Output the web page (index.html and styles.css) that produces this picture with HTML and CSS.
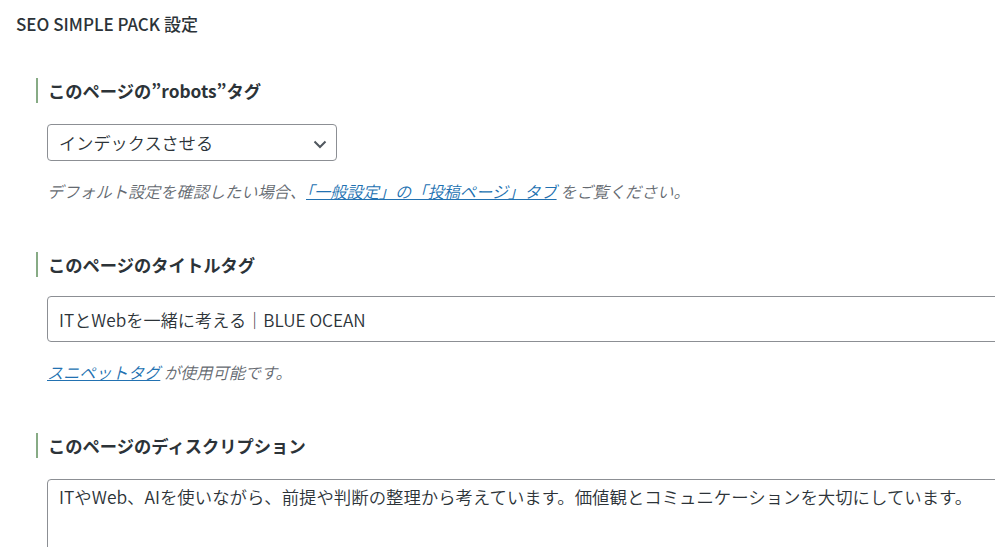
FILE: index.html
```html
<!DOCTYPE html>
<html lang="ja">
<head>
<meta charset="utf-8">
<title>SEO SIMPLE PACK 設定</title>
<link rel="stylesheet" href="styles.css">
</head>
<body>
<div class="page">
  <h1 class="page-title">SEO SIMPLE PACK 設定</h1>

  <section class="field first">
    <h2 class="field-label">このページの”robots”タグ</h2>
    <div class="control">
      <select class="select">
        <option>インデックスさせる</option>
      </select>
    </div>
    <p class="help">デフォルト設定を確認したい場合、<a href="#">「一般設定」の「投稿ページ」タブ</a> をご覧ください。</p>
  </section>

  <section class="field">
    <h2 class="field-label second">このページのタイトルタグ</h2>
    <div class="control">
      <input class="text-input" type="text" value="ITとWebを一緒に考える｜BLUE OCEAN">
    </div>
    <p class="help"><a href="#">スニペットタグ</a> が使用可能です。</p>
  </section>

  <section class="field">
    <h2 class="field-label">このページのディスクリプション</h2>
    <div class="control">
      <textarea class="textarea" rows="4">ITやWeb、AIを使いながら、前提や判断の整理から考えています。価値観とコミュニケーションを大切にしています。</textarea>
    </div>
  </section>
</div>
</body>
</html>
```

FILE: styles.css
```css
html, body {
  margin: 0;
  padding: 0;
  background: #ffffff;
  overflow: hidden;
}

body {
  font-family: "Noto Sans CJK JP", "Noto Sans", sans-serif;
  color: #1d2327;
}

.page {
  padding-left: 16px;
  display: flex;
  flex-direction: column;
}

.page-title {
  margin: 0;
  height: 48px;
  line-height: 48px;
  font-size: 17px;
  font-weight: 500;
  color: #2c3338;
}

.field {
  display: flex;
  flex-direction: column;
  margin-top: 51px;
}

.field.first {
  margin-top: 30px;
}

.field-label {
  margin: 0 0 0 20px;
  padding-left: 10px;
  border-left: 2px solid #87ab85;
  height: 25px;
  line-height: 25px;
  font-size: 17.3px;
  font-weight: 700;
  color: #2c3338;
}

.control {
  margin: 21px 0 0 31px;
}

.field-label.second + .control {
  margin-top: 19px;
}

.select {
  appearance: none;
  -webkit-appearance: none;
  width: 290px;
  height: 37px;
  box-sizing: border-box;
  border: 1px solid #8c8f94;
  border-radius: 4px;
  padding: 0 30px 0 11px;
  font-family: inherit;
  font-size: 17.2px;
  font-weight: 350;
  color: #2c3338;
  background: #fff url("data:image/svg+xml;utf8,<svg xmlns='http://www.w3.org/2000/svg' width='14' height='9' viewBox='0 0 14 9'><path d='M1.5 1.5 L7 7 L12.5 1.5' fill='none' stroke='%2350575e' stroke-width='2'/></svg>") no-repeat right 9px top 15px;
  display: block;
}

.text-input {
  display: block;
  box-sizing: border-box;
  width: 1000px;
  height: 46px;
  border: 1px solid #8c8f94;
  border-radius: 4px;
  padding: 0 11px;
  font-family: inherit;
  font-size: 17.2px;
  font-weight: 350;
  color: #2c3338;
  background: #fff;
}

.textarea {
  display: block;
  box-sizing: border-box;
  width: 1000px;
  height: 120px;
  border: 1px solid #8c8f94;
  border-radius: 4px;
  padding: 4px 11px;
  font-family: inherit;
  font-size: 17.4px;
  font-weight: 350;
  line-height: 26px;
  color: #2c3338;
  background: #fff;
  resize: none;
}

.help {
  margin: 20px 0 0 31px;
  line-height: 20px;
  font-size: 16.2px;
  font-weight: 350;
  font-style: italic;
  color: #646970;
}

.help a {
  color: #2271b1;
  text-decoration: underline;
}
```
